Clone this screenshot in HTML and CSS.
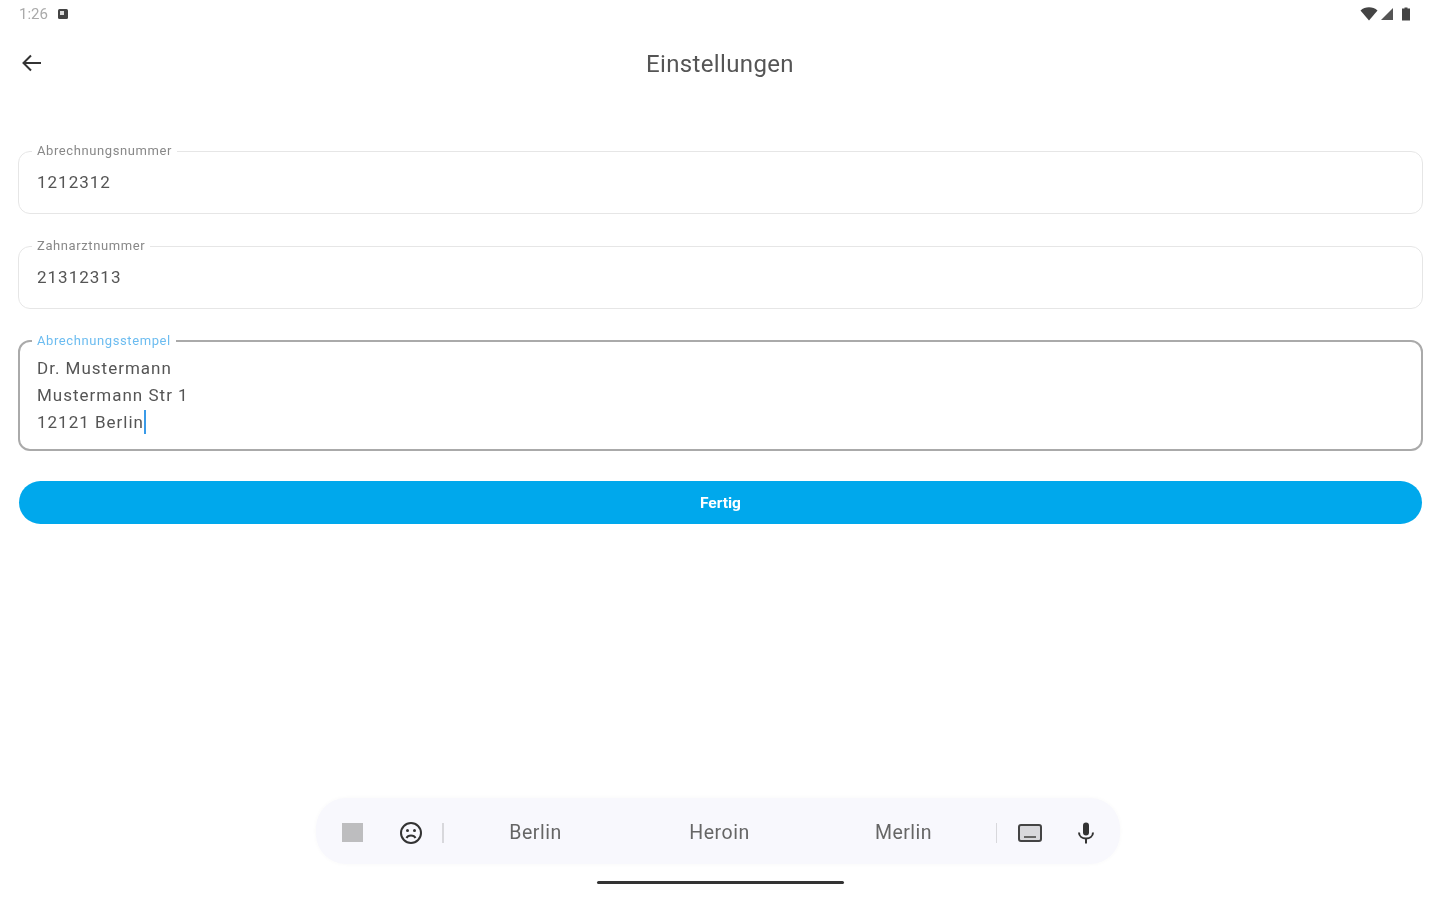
FILE: index.html
```html
<!DOCTYPE html>
<html lang="de">
<head>
<meta charset="utf-8">
<title>Einstellungen</title>
<link rel="stylesheet" href="styles.css">
</head>
<body>
<div class="screen">
  <header class="status">
    <div class="status-left">
      <span class="time">1:26</span>
      <svg class="status-note" viewBox="0 0 12 12"><rect x="1" y="1" width="10" height="10" rx="1.5" fill="#444"/><rect x="3" y="3" width="4" height="4" fill="#ddd"/></svg>
    </div>
    <div class="status-right">
      <svg class="ic-wifi" viewBox="0 0 18 14"><path d="M0.5 3.5 C5 -0.8 13 -0.8 17.5 3.5 L9 13.5 Z" fill="#444"/></svg>
      <svg class="ic-signal" viewBox="0 0 14 14"><path d="M1 13 L13 1 V13 Z" fill="#555"/></svg>
      <svg class="ic-batt" viewBox="0 0 10 14"><path d="M3.5 0.5 H6.5 V1.5 H9 V13.5 H1 V1.5 H3.5 Z" fill="#444"/></svg>
    </div>
  </header>

  <div class="appbar">
    <svg class="back" viewBox="0 0 24 24"><path d="M21 12 H4 M11 4.5 L3.5 12 L11 19.5" fill="none" stroke="#333" stroke-width="2"/></svg>
    <h1 class="title">Einstellungen</h1>
  </div>

  <main class="form">
    <fieldset class="field">
      <legend class="label">Abrechnungsnummer</legend>
      <div class="value">1212312</div>
    </fieldset>
    <fieldset class="field">
      <legend class="label">Zahnarztnummer</legend>
      <div class="value">21312313</div>
    </fieldset>
    <fieldset class="field focused">
      <legend class="label">Abrechnungsstempel</legend>
      <div class="value multi">
        <div>Dr. Mustermann</div>
        <div>Mustermann Str 1</div>
        <div>12121 Berlin<span class="caret"></span></div>
      </div>
    </fieldset>
    <button class="done" type="button">Fertig</button>
  </main>

  <div class="kbd-wrap">
    <div class="kbd">
      <div class="kbd-icons-left">
        <span class="square"></span>
        <svg class="emoji" viewBox="0 0 24 24"><circle cx="12" cy="12" r="10" fill="none" stroke="#333" stroke-width="2"/><circle cx="8.5" cy="9.5" r="1.5" fill="#333"/><circle cx="15.5" cy="9.5" r="1.5" fill="#333"/><path d="M7.5 17 C9 13.8 15 13.8 16.5 17" fill="none" stroke="#333" stroke-width="2"/></svg>
      </div>
      <span class="sep"></span>
      <div class="suggestions">
        <span>Berlin</span>
        <span>Heroin</span>
        <span>Merlin</span>
      </div>
      <span class="sep"></span>
      <div class="kbd-icons-right">
        <svg class="keyb" viewBox="0 0 24 18"><rect x="1" y="1" width="22" height="16" rx="2" fill="#d8d8dc" stroke="#444" stroke-width="2"/><rect x="6" y="12" width="12" height="2" fill="#666"/></svg>
        <svg class="mic" viewBox="0 0 18 22"><rect x="6" y="0.5" width="6" height="13" rx="3" fill="#333"/><path d="M2 10.5 C2 18.5 16 18.5 16 10.5" fill="none" stroke="#333" stroke-width="2"/><rect x="8" y="16" width="2" height="5.5" fill="#333"/></svg>
      </div>
    </div>
    <div class="home"></div>
  </div>
</div>
</body>
</html>
```
FILE: styles.css
```css
* { box-sizing: border-box; }
html, body { margin: 0; padding: 0; background: #fff; }
body { font-family: Roboto, "Liberation Sans", sans-serif; color: #444; }
.screen {
  width: 1440px; height: 900px; display: flex; flex-direction: column;
  overflow: hidden; filter: blur(0.7px);
}
.status {
  height: 28px; padding: 0 29px 0 19px; display: flex;
  justify-content: space-between; align-items: center; flex: none;
}
.status-left { display: flex; align-items: center; gap: 9px; }
.time { font-size: 15px; color: #aaa; }
.status-note { width: 12px; height: 12px; }
.status-right { display: flex; align-items: center; gap: 2px; }
.ic-wifi { width: 18px; height: 14px; }
.ic-signal { width: 14px; height: 14px; }
.ic-batt { width: 10px; height: 14px; margin-left: 5px; }
.appbar {
  height: 70px; display: flex; align-items: center; justify-content: center;
  padding-top: 2px; flex: none; position: relative;
}
.back { position: absolute; left: 20px; top: 23px; width: 24px; height: 24px; }
.title { margin: 0; font-size: 24px; font-weight: 400; color: #555; letter-spacing: 0.35px; }
.form { padding: 47px 17px 0 18px; display: flex; flex-direction: column; flex: 1; }
.field {
  margin: 0 0 26px; padding: 0 18px; height: 69px; min-width: 0;
  border: 1.5px solid #e6e6e6; border-radius: 12px;
}
.label {
  padding: 0 5px; margin-left: -5px; font-size: 13px; line-height: 12px;
  color: #888; letter-spacing: 0.6px;
}
.value { font-size: 17px; line-height: 27px; letter-spacing: 1px; color: #555; padding-top: 12px; }
.focused { height: 116px; margin-bottom: 30px; padding: 0 17px; border: 2px solid #aaa; }
.focused .label { color: #6cbcf0; }
.value.multi { padding-top: 8px; }
.caret { display: inline-block; width: 2px; height: 24px; background: #3a9be8; vertical-align: -6px; }
.done {
  height: 43px; margin: 0 1px; border: 0; border-radius: 22px; background: #00a8ec;
  color: #fff; font: 700 15.5px Roboto, sans-serif; padding: 0;
}
.kbd-wrap { flex: none; display: flex; flex-direction: column; align-items: center; padding-bottom: 16px; }
.kbd {
  width: 804px; height: 66px; margin-right: 4px; border-radius: 30px; background: #f8f8fd;
  box-shadow: 0 0 4px rgba(0, 0, 0, 0.03);
  display: flex; align-items: center; padding: 3px 25px 0 26px;
}
.kbd-icons-left { display: flex; align-items: center; gap: 36px; margin-right: 19px; }
.square { width: 21px; height: 19px; background: #bdbdbf; }
.emoji { width: 24px; height: 24px; }
.sep { width: 1.5px; height: 20px; background: #d8d8dc; flex: none; }
.suggestions { flex: 1; display: grid; grid-template-columns: repeat(3, 1fr); text-align: center; font-size: 19.5px; color: #666; letter-spacing: 0.5px; }
.kbd-icons-right { display: flex; align-items: center; gap: 35px; margin-left: 21px; }
.keyb { width: 24px; height: 18px; }
.mic { width: 18px; height: 22px; }
.home { width: 247px; height: 3px; margin-top: 17px; background: #333; border-radius: 2px; }
```
